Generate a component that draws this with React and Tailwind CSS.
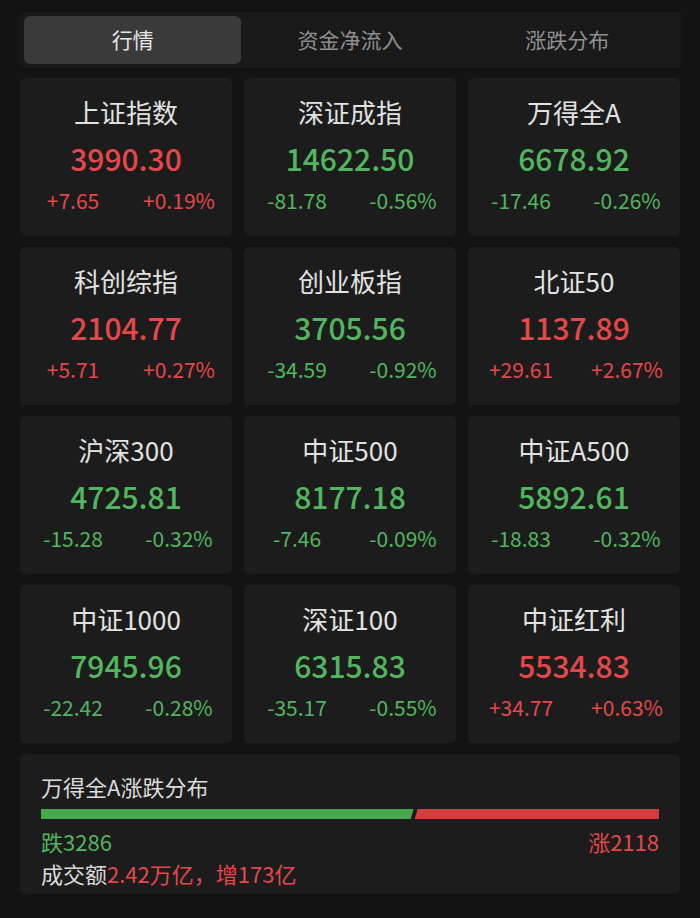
const font = { fontFamily: '"Noto Sans CJK SC", "Noto Sans", sans-serif' };

const RED = "text-[#e5484a]";
const GREEN = "text-[#52b65e]";

const cards = [
  ["上证指数", "3990.30", "+7.65", "+0.19%", "up"],
  ["深证成指", "14622.50", "-81.78", "-0.56%", "down"],
  ["万得全A", "6678.92", "-17.46", "-0.26%", "down"],
  ["科创综指", "2104.77", "+5.71", "+0.27%", "up"],
  ["创业板指", "3705.56", "-34.59", "-0.92%", "down"],
  ["北证50", "1137.89", "+29.61", "+2.67%", "up"],
  ["沪深300", "4725.81", "-15.28", "-0.32%", "down"],
  ["中证500", "8177.18", "-7.46", "-0.09%", "down"],
  ["中证A500", "5892.61", "-18.83", "-0.32%", "down"],
  ["中证1000", "7945.96", "-22.42", "-0.28%", "down"],
  ["深证100", "6315.83", "-35.17", "-0.55%", "down"],
  ["中证红利", "5534.83", "+34.77", "+0.63%", "up"],
];

function IndexCard({ name, value, chg, pct, dir }) {
  const color = dir === "up" ? RED : GREEN;
  return (
    <div className="h-[158px] rounded-md bg-[#1c1c1c] flex flex-col items-center pt-[17px]">
      <div className="text-[26px] leading-[34px] text-[#e2e2e2]">{name}</div>
      <div className={`mt-[9px] text-[30px] leading-[40px] font-medium ${color}`}>{value}</div>
      <div className={`mt-[8px] w-full grid grid-cols-2 text-[21px] leading-[28px] ${color}`}>
        <span className="text-center">{chg}</span>
        <span className="text-center">{pct}</span>
      </div>
    </div>
  );
}

export default function App() {
  const tabs = ["行情", "资金净流入", "涨跌分布"];
  return (
    <div style={font} className="w-[700px] h-[918px] bg-[#131313] px-[20px] pt-[12px]">
      {/* Tabs */}
      <div className="h-[56px] mx-[-2px] rounded-md bg-[#191919] flex items-center px-[6px]">
        {tabs.map((t, i) => (
          <div
            key={t}
            className={`flex-1 h-[48px] rounded-md flex items-center justify-center text-[21px] ${
              i === 0 ? "bg-[#3a3a3a] text-[#e6e6e6]" : "text-[#8f8f8f]"
            }`}
          >
            {t}
          </div>
        ))}
      </div>

      {/* Index grid */}
      <div className="mt-[10px] grid grid-cols-3 gap-x-[12px] gap-y-[11px]">
        {cards.map(([name, value, chg, pct, dir]) => (
          <IndexCard key={name} name={name} value={value} chg={chg} pct={pct} dir={dir} />
        ))}
      </div>

      {/* Distribution */}
      <div className="mt-[11px] h-[140px] rounded-md bg-[#1c1c1c] px-[21px] pt-[18px]">
        <div className="text-[22px] leading-[28px] text-[#dcdcdc]">万得全A涨跌分布</div>
        <div className="mt-[9px] flex h-[10px] gap-[2px]">
          <div
            className="h-full bg-[#47a84f]"
            style={{ width: "60.3%", clipPath: "polygon(0 0, 100% 0, calc(100% - 3px) 100%, 0 100%)" }}
          />
          <div
            className="h-full flex-1 bg-[#d43d3d] ml-[-1px]"
            style={{ clipPath: "polygon(3px 0, 100% 0, 100% 100%, 0 100%)" }}
          />
        </div>
        <div className="mt-[8px] flex justify-between text-[22px] leading-[28px]">
          <span className={GREEN}>跌3286</span>
          <span className={RED}>涨2118</span>
        </div>
        <div className="mt-[4px] text-[22px] leading-[28px] text-[#dcdcdc]">
          成交额<span className={RED}>2.42万亿，增173亿</span>
        </div>
      </div>
    </div>
  );
}
